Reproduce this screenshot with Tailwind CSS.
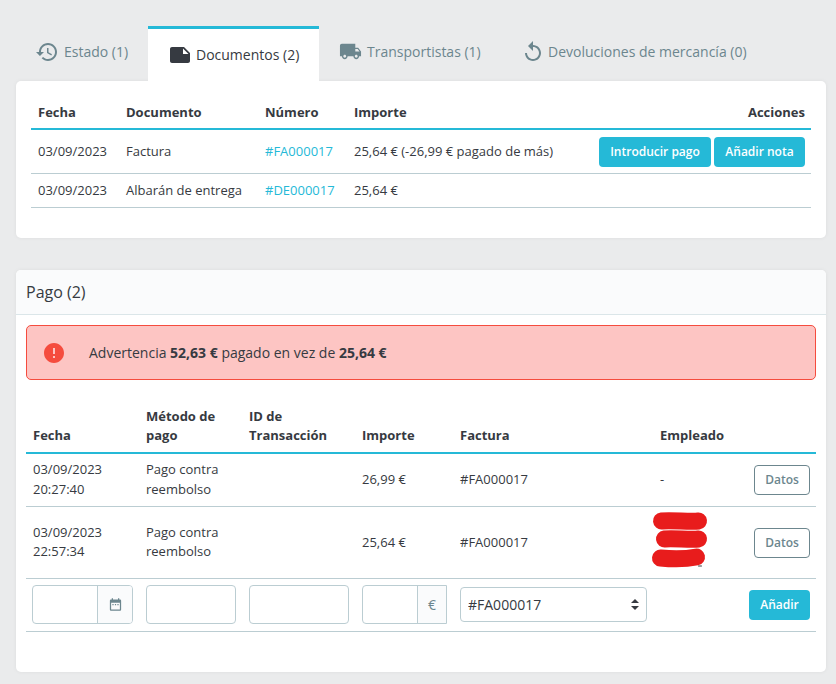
<!DOCTYPE html>
<html lang="es">

<head>
  <meta charset="UTF-8" />
  <title>Pedido</title>
  <script src="https://cdn.jsdelivr.net/npm/@tailwindcss/browser@4"></script>
</head>

<body class="bg-[#eaebec] text-[#363a41] font-['Open_Sans',sans-serif] text-[13px] leading-[19.5px] h-[684px] overflow-hidden">
  <div class="ml-[16px] w-[810px]">
    <!-- Tabs -->
    <nav class="flex items-start pt-[26px] h-[81px] text-[14px] leading-[20px] text-[#6c868e]">
      <a class="flex items-center mt-[14px] pl-[19px] w-[132px] gap-[5px]">
        <svg class="w-[24px] h-[24px] fill-[#6c868e] shrink-0" viewBox="0 0 24 24"><path d="M13 3c-4.97 0-9 4.03-9 9H1l3.89 3.89.07.14L9 12H6c0-3.87 3.13-7 7-7s7 3.13 7 7-3.13 7-7 7c-1.93 0-3.68-.79-4.94-2.06l-1.42 1.42C8.27 19.99 10.51 21 13 21c4.97 0 9-4.03 9-9s-4.03-9-9-9zm-1 5v5l4.28 2.54.72-1.21-3.5-2.08V8H12z" /></svg>
        <span>Estado (1)</span>
      </a>
      <a class="flex items-center h-[55px] w-[171px] border-t-[3px] border-[#25b9d7] bg-white pl-[20px] text-[#363a41]">
        <svg class="w-[24px] h-[24px] fill-[#363a41] shrink-0 mr-[4px]" viewBox="0 0 24 24"><path d="M22 10l-6-6H4c-1.1 0-2 .9-2 2v12.01c0 1.1.9 1.99 2 1.99l16-.01c1.1 0 2-.89 2-1.99v-8zm-7-4.5l5.5 5.5H15V5.5z" /></svg>
        <span>Documentos (2)</span>
      </a>
      <a class="flex items-center mt-[14px] pl-[20px] w-[202px] gap-[5px]">
        <svg class="w-[23px] h-[23px] fill-[#6c868e] shrink-0" viewBox="0 0 24 24"><path d="M20 8h-3V4H3c-1.1 0-2 .9-2 2v11h2c0 1.66 1.34 3 3 3s3-1.34 3-3h6c0 1.66 1.34 3 3 3s3-1.34 3-3h2v-5l-3-4zM6 18.5c-.83 0-1.5-.67-1.5-1.5s.67-1.5 1.5-1.5 1.5.67 1.5 1.5-.67 1.5-1.5 1.5zm13.5-9l1.96 2.5H17V9.5h2.5zm-1.5 9c-.83 0-1.5-.67-1.5-1.5s.67-1.5 1.5-1.5 1.5.67 1.5 1.5-.67 1.5-1.5 1.5z" /></svg>
        <span>Transportistas (1)</span>
      </a>
      <a class="flex items-center mt-[14px] gap-[3px]">
        <svg class="w-[24px] h-[24px] fill-[#6c868e] shrink-0" viewBox="0 0 24 24"><path d="M12 5V1L7 6l5 5V7c3.31 0 6 2.69 6 6s-2.69 6-6 6-6-2.69-6-6H4c0 4.42 3.58 8 8 8s8-3.58 8-8-3.58-8-8-8z" /></svg>
        <span>Devoluciones de mercancía (0)</span>
      </a>
    </nav>

    <!-- Documentos -->
    <section class="bg-white rounded-[5px] shadow-[0_0_4px_rgba(0,0,0,0.06)] h-[157px] pt-[14px] px-[15px]">
      <table class="w-[780px] table-fixed border-collapse">
        <colgroup>
          <col class="w-[88px]" />
          <col class="w-[139px]" />
          <col class="w-[89px]" />
          <col class="w-[250px]" />
          <col />
        </colgroup>
        <thead>
          <tr class="border-b-2 border-[#25b9d7] font-bold text-left">
            <th class="pl-[7px] pt-[3px] h-[34px] font-bold">Fecha</th>
            <th class="pl-[7px] pt-[3px] font-bold">Documento</th>
            <th class="pl-[7px] pt-[3px] font-bold">Número</th>
            <th class="pl-[7px] pt-[3px] font-bold">Importe</th>
            <th class="pr-[6px] pt-[3px] font-bold text-right">Acciones</th>
          </tr>
        </thead>
        <tbody>
          <tr class="border-b border-[#bbcdd2]">
            <td class="pl-[7px] h-[44px]">03/09/2023</td>
            <td class="pl-[7px]">Factura</td>
            <td class="pl-[7px] text-[#25b9d7]">#FA000017</td>
            <td class="pl-[7px] whitespace-nowrap">25,64 € (-26,99 € pagado de más)</td>
            <td class="pr-[6px] pt-[1px] text-right">
              <div class="flex justify-end gap-[3px]">
                <button class="h-[30px] w-[112px] rounded-[4px] bg-[#25b9d7] text-white font-semibold text-[12px]">Introducir pago</button>
                <button class="h-[30px] w-[91px] rounded-[4px] bg-[#25b9d7] text-white font-semibold text-[12px]">Añadir nota</button>
              </div>
            </td>
          </tr>
          <tr class="border-b border-[#bbcdd2]">
            <td class="pl-[7px] pt-[1px] h-[34px]">03/09/2023</td>
            <td class="pl-[7px] pt-[1px]">Albarán de entrega</td>
            <td class="pl-[7px] pt-[1px] text-[#25b9d7]">#DE000017</td>
            <td class="pl-[7px] pt-[1px]">25,64 €</td>
            <td></td>
          </tr>
        </tbody>
      </table>
    </section>

    <!-- Pago -->
    <section class="mt-[32px] bg-white rounded-[5px] shadow-[0_0_4px_rgba(0,0,0,0.06)] h-[402px]">
      <header class="h-[45px] bg-[#fafbfc] border-b border-[#dbe6e9] rounded-t-[5px] flex items-center pl-[10px] pt-[1px] text-[16px]">Pago (2)</header>
      <div class="px-[10px] pt-[10px]">
        <div class="h-[55px] rounded-[5px] border border-[#f54c3e] bg-[#fdc5c3] flex items-center pl-[15px] text-[14px]">
          <svg class="w-[24px] h-[24px] fill-[#f54c3e] shrink-0 mr-[23px]" viewBox="0 0 24 24"><path d="M12 2C6.48 2 2 6.48 2 12s4.48 10 10 10 10-4.48 10-10S17.52 2 12 2zm1 15h-2v-2h2v2zm0-4h-2V7h2v6z" /></svg>
          <p>Advertencia <b class="font-bold">52,63 €</b> pagado en vez de <b class="font-bold">25,64 €</b></p>
        </div>

        <table class="mt-[17px] w-[790px] table-fixed border-collapse">
          <colgroup>
            <col class="w-[114px]" />
            <col class="w-[103px]" />
            <col class="w-[113px]" />
            <col class="w-[98px]" />
            <col class="w-[200px]" />
            <col class="w-[86px]" />
            <col />
          </colgroup>
          <thead>
            <tr class="border-b-2 border-[#25b9d7] text-left align-bottom leading-[19px]">
              <th class="pl-[7px] pb-[7px] font-bold h-[56px]">Fecha</th>
              <th class="pl-[6px] pb-[7px] font-bold">Método de pago</th>
              <th class="pl-[6px] pb-[7px] font-bold">ID de Transacción</th>
              <th class="pl-[6px] pb-[7px] font-bold">Importe</th>
              <th class="pl-[6px] pb-[7px] font-bold">Factura</th>
              <th class="pl-[6px] pb-[7px] font-bold whitespace-nowrap">Empleado</th>
              <th></th>
            </tr>
          </thead>
          <tbody>
            <tr class="border-b border-[#bbcdd2]">
              <td class="pl-[7px] h-[53px]">03/09/2023<br />20:27:40</td>
              <td class="pl-[6px]">Pago contra reembolso</td>
              <td></td>
              <td class="pl-[6px]">26,99 €</td>
              <td class="pl-[6px]">#FA000017</td>
              <td class="pl-[6px]">-</td>
              <td class="pr-[6px] text-right">
                <button class="h-[30px] w-[56px] rounded-[4px] border border-[#6c868e] text-[#6c868e] font-semibold text-[12px]">Datos</button>
              </td>
            </tr>
            <tr class="border-b border-[#bbcdd2]">
              <td class="pl-[7px] h-[72px]">03/09/2023<br />22:57:34</td>
              <td class="pl-[6px]">Pago contra reembolso</td>
              <td></td>
              <td class="pl-[6px] pt-[1px]">25,64 €</td>
              <td class="pl-[6px] pt-[1px]">#FA000017</td>
              <td class="relative">
                <!-- scribble hiding the employee name -->
                <svg class="absolute left-0 top-[1px] w-[60px] h-[72px] overflow-visible" viewBox="0 0 60 72" fill="none" stroke-linecap="round">
                  <path d="M44.5 58h3" stroke="#363a41" stroke-width="1" />
                  <g stroke="#e81c1c" stroke-width="17">
                    <path d="M7.5 13c10-1 29 1 37 0" />
                    <path d="M10.5 31c8-1 26 1 34 0" />
                    <path d="M6.5 50c10 1 26 1 36-1" />
                  </g>
                </svg>
              </td>
              <td class="pr-[6px] pt-[1px] text-right">
                <button class="h-[30px] w-[56px] rounded-[4px] border border-[#6c868e] text-[#6c868e] font-semibold text-[12px]">Datos</button>
              </td>
            </tr>
            <tr class="border-b border-[#bbcdd2]">
              <td class="pl-[6px] h-[53px]">
                <div class="flex h-[39px] w-[101px] rounded-[4px] border border-[#bbcdd2] overflow-hidden">
                  <input type="text" class="w-[64px] min-w-0" />
                  <span class="flex-1 flex items-center justify-center bg-[#fafbfc] border-l border-[#bbcdd2]">
                    <svg class="w-[15px] h-[15px] fill-[#6c868e]" viewBox="0 0 24 24"><path d="M9 11H7v2h2v-2zm4 0h-2v2h2v-2zm4 0h-2v2h2v-2zm2-7h-1V2h-2v2H8V2H6v2H5c-1.11 0-1.99.9-1.99 2L3 20c0 1.1.89 2 2 2h14c1.1 0 2-.9 2-2V6c0-1.1-.9-2-2-2zm0 16H5V9h14v11z" /></svg>
                  </span>
                </div>
              </td>
              <td class="pl-[6px]"><input type="text" class="block h-[39px] w-[90px] rounded-[4px] border border-[#bbcdd2]" /></td>
              <td class="pl-[6px]"><input type="text" class="block h-[39px] w-[100px] rounded-[4px] border border-[#bbcdd2]" /></td>
              <td class="pl-[6px]">
                <div class="flex h-[39px] w-[85px] rounded-l-[4px] border border-[#bbcdd2]">
                  <input type="text" class="w-[54px] min-w-0" />
                  <span class="flex-1 flex items-center justify-center bg-[#fafbfc] border-l border-[#bbcdd2] text-[#6c868e] text-[14px]">€</span>
                </div>
              </td>
              <td class="pl-[6px]">
                <div class="relative w-[187px]">
                  <select class="block h-[35px] w-full appearance-none rounded-[4px] border border-[#bbcdd2] bg-white pl-[7px] text-[14px]">
                    <option>#FA000017</option>
                  </select>
                  <svg class="absolute right-[8px] top-[12px] w-[8px] h-[11px] fill-[#363a41]" viewBox="0 0 8 11"><path d="M4 0l4 4H0zM4 11L0 7h8z" /></svg>
                </div>
              </td>
              <td></td>
              <td class="pr-[6px] text-right">
                <button class="h-[30px] w-[61px] rounded-[4px] bg-[#25b9d7] text-white font-semibold text-[12px] float-right">Añadir</button>
              </td>
            </tr>
          </tbody>
        </table>
      </div>
    </section>
  </div>
</body>

</html>
